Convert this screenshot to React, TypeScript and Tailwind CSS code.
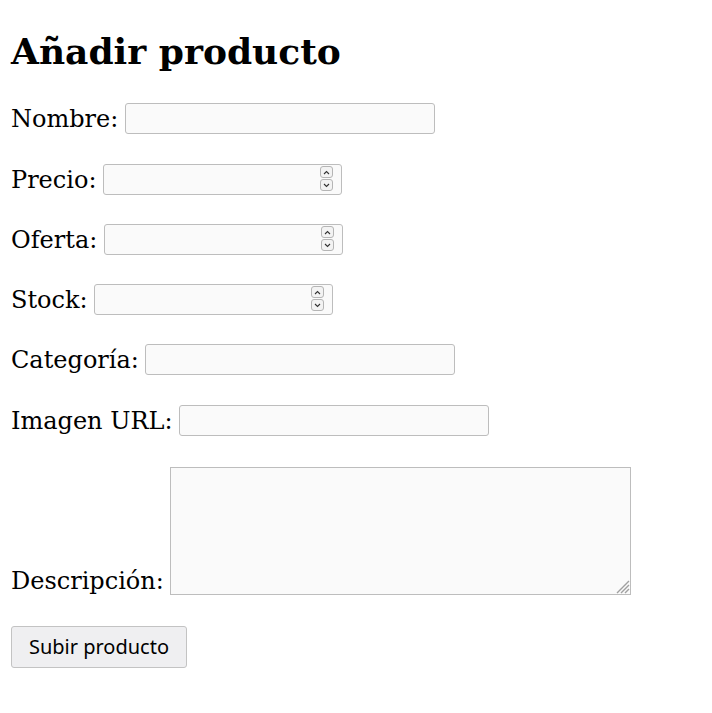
import React from "react";

function Spinner() {
  return (
    <div className="absolute right-[9px] top-[2px] flex flex-col gap-[1px]">
      <div className="w-[13px] h-[12px] border border-[#b5b5b5] rounded-[3px] bg-[#f3f3f3] flex items-center justify-center">
        <svg width="7" height="5" viewBox="0 0 7 5"><path d="M1 4 L3.5 1.5 L6 4" fill="none" stroke="#333" strokeWidth="1.1" /></svg>
      </div>
      <div className="w-[13px] h-[12px] border border-[#b5b5b5] rounded-[3px] bg-[#f3f3f3] flex items-center justify-center">
        <svg width="7" height="5" viewBox="0 0 7 5"><path d="M1 1 L3.5 3.5 L6 1" fill="none" stroke="#333" strokeWidth="1.1" /></svg>
      </div>
    </div>
  );
}

function Row({ label, width, number, mt }: { label: string; width: number; number?: boolean; mt: string }) {
  return (
    <div className={`flex items-center gap-[6.6px] ${mt}`}>
      <label className="leading-[28px] whitespace-nowrap">{label}</label>
      <div className="relative">
        <input
          type="text"
          className="block h-[31px] border border-[#bdbdbd] rounded-[3px] bg-[#fafafa] outline-none"
          style={{ width }}
        />
        {number && <Spinner />}
      </div>
    </div>
  );
}

export default function App() {
  return (
    <div className="min-h-[713px] bg-white text-black font-['DejaVu_Serif',serif] text-[24px] px-[11px] pt-[30px]">
      <h1 className="text-[36px] font-bold leading-[42px] mb-[31px]">Añadir producto</h1>
      <form className="flex flex-col">
        <Row label="Nombre:" width={310} mt="" />
        <Row label="Precio:" width={239} number mt="mt-[30px]" />
        <Row label="Oferta:" width={239} number mt="mt-[29px]" />
        <Row label="Stock:" width={239} number mt="mt-[29px]" />
        <Row label="Categoría:" width={310} mt="mt-[29px]" />
        <Row label="Imagen URL:" width={310} mt="mt-[30px]" />
        <div className="flex items-end gap-[6px] mt-[31px]">
          <label className="leading-[28px] whitespace-nowrap">Descripción:</label>
          <div className="relative">
            <textarea className="block w-[461px] h-[128px] border border-[#bdbdbd] bg-[#fafafa] resize-none outline-none" />
            <svg className="absolute right-[1px] bottom-[1px]" width="15" height="15" viewBox="0 0 15 15">
              <path d="M14 2 L2 14 M14 6 L6 14 M14 10 L10 14" stroke="#a0a0a0" strokeWidth="1.4" />
            </svg>
          </div>
        </div>
        <div className="mt-[31px]">
          <button
            type="button"
            className="h-[42px] w-[176px] border border-[#c3c3c3] rounded-[3px] bg-[#efeff1] font-['Noto_Sans',sans-serif] text-[20px] text-black leading-none"
          >
            Subir producto
          </button>
        </div>
      </form>
    </div>
  );
}
